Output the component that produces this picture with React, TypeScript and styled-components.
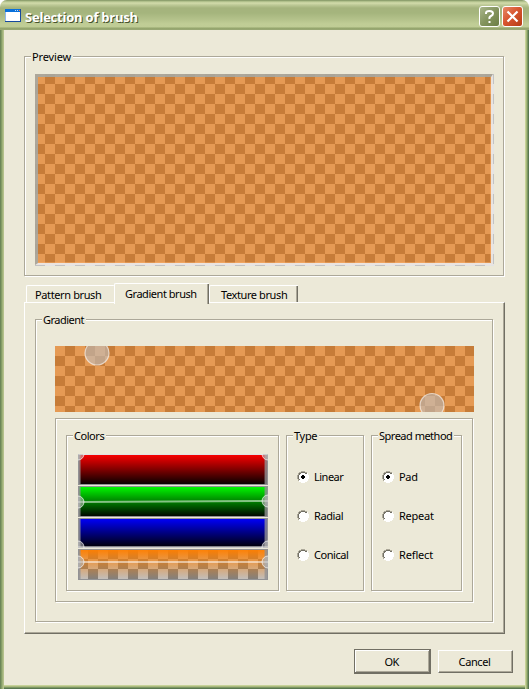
import React, { useState } from "react";
import styled, { createGlobalStyle, css } from "styled-components";

const face = "#ece9d8";
const shade = "#aca899";
const dark = "#716f64";

const GlobalStyle = createGlobalStyle`
  * { box-sizing: border-box; }
  body { margin: 0; background: #fff; }
  button { font: inherit; color: inherit; }
`;

const Window = styled.div`
  width: 529px;
  height: 689px;
  overflow: hidden;
  display: flex;
  flex-direction: column;
  border-radius: 7px 7px 0 0;
  background: ${face};
  color: #000;
  font: 11px/14px "Noto Sans", "Open Sans", sans-serif;
  cursor: default;
`;

const TitleBar = styled.header`
  height: 30px;
  flex: none;
  display: flex;
  align-items: flex-start;
  padding: 6px 6px 0 5px;
  background: linear-gradient(
    #788b5c 0, #a6b782 1px, #d3dcab 3px, #bdc996 5px, #a5b37d 8px,
    #a5b57d 13px, #b3c18a 19px, #c0cd96 24px, #bfcc95 27px, #94a56c 28px, #99a875 30px
  );
`;

const AppIcon = styled.svg`
  flex: none;
  margin-top: 3px;
`;

const Title = styled.h1`
  flex: 1;
  margin: 2px 0 0 4px;
  font: bold 13px/18px "Open Sans", "Noto Sans", sans-serif;
  letter-spacing: -0.22px;
  color: #fff;
  text-shadow: 1px 1px 0 #46522c;
`;

const CaptionButton = styled.button<{ $close?: boolean }>`
  width: 21px;
  height: 21px;
  margin-left: 2px;
  padding: 0;
  display: flex;
  border: 1px solid #fff;
  border-radius: 3px;
  background: ${(p) =>
    p.$close
      ? "linear-gradient(135deg, #e88a69, #d85630 45%, #b63d14)"
      : "linear-gradient(135deg, #a9b68b, #84945e 50%, #6c7e45)"};
`;

const Frame = styled.main`
  flex: 1;
  display: flex;
  flex-direction: column;
  padding: 26px 20px 0 20px;
  border: solid transparent;
  border-width: 0 4px 4px;
  background:
    linear-gradient(${face}, ${face}) padding-box,
    linear-gradient(90deg, #6d8659 0 1px, #849d66 1px 2px, #9fb17b 2px 3px, #b4c18b 3px 4px, transparent 4px calc(100% - 4px), #c6d298 calc(100% - 4px) calc(100% - 3px), #a5b87a calc(100% - 3px) calc(100% - 2px), #7d9763 calc(100% - 2px) calc(100% - 1px), #577650 calc(100% - 1px)) border-box,
    linear-gradient(0deg, #577650 0 1px, #7d9763 1px 2px, #a9b97e 2px 3px, #c6d298 3px 4px) border-box;
`;

const Etched = styled.section<{ $w: number; $h: number }>`
  flex: none;
  width: ${(p) => p.$w}px;
  height: ${(p) => p.$h}px;
  display: flex;
  flex-direction: column;
  border: 1px solid ${shade};
  box-shadow: 1px 1px 0 #fff, inset 1px 1px 0 #fff;
`;

const Legend = styled.h2<{ $spacing?: number }>`
  flex: none;
  align-self: flex-start;
  height: 14px;
  margin: -7px 0 0 6px;
  padding: 0 2px 0 1px;
  background: ${face};
  font: inherit;
  white-space: nowrap;
  letter-spacing: ${(p) => p.$spacing ?? 0}px;
`;

const checker = (light: string, deep: string) =>
  css`repeating-conic-gradient(${deep} 0 25%, ${light} 0 50%) 0 0 / 20px 20px`;

const PreviewArea = styled.div`
  width: 459px;
  height: 192px;
  margin: 10px 0 0 10px;
  padding: 0 1px 1px 0;
  background: ${checker("#e4e4e4", "#c2c2c2")};
`;

const PreviewBrush = styled.div`
  height: 191px;
  border: solid;
  border-width: 3px 2px 2px 3px;
  border-color: rgba(167, 169, 163, 0.9) rgba(236, 236, 238, 0.92) rgba(236, 236, 238, 0.92) rgba(167, 169, 163, 0.9);
  box-shadow: inset -1px -1px 0 rgba(255, 180, 110, 0.45);
  background: ${checker("#e59a54", "#c67c38")} border-box;
`;

const TabStrip = styled.nav`
  flex: none;
  height: 20px;
  margin-top: 7px;
  padding-left: 2px;
  display: flex;
  align-items: flex-end;
`;

const Tab = styled.button<{
  $active?: boolean;
  $covered?: boolean;
  $w: number;
  $spacing: number;
  $pad: number;
}>`
  flex: none;
  width: ${(p) => p.$w}px;
  height: ${(p) => (p.$active ? 21 : 17)}px;
  margin-bottom: ${(p) => (p.$active ? -1 : 1)}px;
  padding: ${(p) => (p.$active ? "0" : "1px")} 0 ${(p) => (p.$active ? "1px" : "0")} ${(p) => p.$pad}px;
  z-index: ${(p) => (p.$active ? 1 : 0)};
  border: 0 solid #fff;
  border-width: 1px 0 0 1px;
  border-radius: 2px 1px 0 0;
  background: ${face};
  box-shadow: ${(p) => (p.$covered ? "none" : `inset -1px 0 0 ${dark}, inset -2px 0 0 ${shade}`)};
  text-align: left;
  white-space: nowrap;
  letter-spacing: ${(p) => p.$spacing}px;
`;

const TabPane = styled.div`
  width: 481px;
  height: 332px;
  flex: none;
  margin-top: -1px;
  padding: 16px 10px;
  border: 1px solid;
  border-color: #fff ${dark} ${dark} #fff;
  box-shadow: inset -1px -1px 0 ${shade};
`;

const GradientStrip = styled.div`
  width: 419px;
  height: 66px;
  flex: none;
  margin: 19px 0 0 19px;
  background: ${checker("#e59a54", "#c67c38")};
`;

const Controls = styled(Etched)`
  margin: 6px 0 0 19px;
  padding: 16px 0 0 10px;
  flex-direction: row;
  gap: 7px;
`;

const Bars = styled.div`
  display: flex;
  flex-direction: column;
  gap: 1px;
  margin: 11px 0 0 11px;
`;

const BarSvg = styled.svg`
  display: block;
  flex: none;
`;

const Options = styled.div`
  display: flex;
  flex-direction: column;
  gap: 25px;
  padding: 27px 0 0 10px;
`;

const Option = styled.label<{ $spacing?: number }>`
  display: flex;
  align-items: center;
  height: 14px;
  gap: 5px;
  letter-spacing: ${(p) => p.$spacing ?? 0}px;
`;

const Footer = styled.footer`
  display: flex;
  align-items: center;
  gap: 7px;
  margin: 15px 0 0 330px;
`;

const PushButton = styled.button<{ $primary?: boolean; $spacing: number }>`
  flex: none;
  width: ${(p) => (p.$primary ? 77 : 75)}px;
  height: ${(p) => (p.$primary ? 25 : 23)}px;
  padding: 0 2px 0 0;
  border: 1px solid;
  border-color: ${(p) => (p.$primary ? dark : `#fff ${dark} ${dark} #fff`)};
  background: ${face};
  box-shadow: ${(p) =>
    p.$primary
      ? `inset -1px -1px 0 ${dark}, inset 1px 1px 0 #fff, inset -2px -2px 0 ${shade}`
      : `inset -1px -1px 0 ${shade}`};
  letter-spacing: ${(p) => p.$spacing}px;
`;

type BarProps = { name: string; color: string; h: number; y1: number; y2: number };

function ColorBar({ name, color, h, y1, y2 }: BarProps) {
  const alpha = name === "alpha";
  return (
    <BarSvg width="190" height={h} viewBox={`0 0 190 ${h}`}>
      <defs>
        <linearGradient id={name} x1="0" y1="0" x2="0" y2="1">
          <stop offset="0" stopColor={color} />
          <stop offset="1" stopColor={alpha ? color : "#000"} stopOpacity={alpha ? 0 : 1} />
        </linearGradient>
        <pattern id={`${name}-check`} width="20" height="20" patternUnits="userSpaceOnUse">
          <rect width="20" height="20" fill="#808080" />
          <path d="M0 0h10v10H0zM10 10h10v10H10z" fill="#c0c0c0" />
        </pattern>
      </defs>
      {alpha && <rect width="190" height={h} fill={`url(#${name}-check)`} />}
      <rect width="190" height={h} fill={`url(#${name})`} />
      <g fill="#929294">
        <rect width="190" height="1" fill={y1 <= 2 ? "#c1bfc5" : "#929294"} />
        <rect y={h - 1} width="190" height="1" />
        <rect width="1" height={h} />
        <rect x="189" width="1" height={h} />
        <rect x="1" y="1" width="1" height={h - 2} opacity=".85" />
        <rect x="2" y="1" width="1" height={h - 2} opacity=".45" />
        <rect x="187" y="1" width="2" height={h - 2} opacity=".8" />
        <rect x="186" y="1" width="1" height={h - 2} opacity=".35" />
      </g>
      <path d={`M0 ${y1}L190 ${y2}`} stroke="#fff" strokeOpacity=".52" strokeWidth="2" />
      {[[0, y1], [190, y2]].map(([x, y]) => (
        <circle key={x} cx={x} cy={y} r="6" fill="#bfbfbf" fillOpacity=".58" stroke="#fff" strokeOpacity=".65" />
      ))}
    </BarSvg>
  );
}

function Radio({ on }: { on: boolean }) {
  return (
    <svg width="12" height="12" viewBox="0 0 12 12" shapeRendering="crispEdges">
      <path d="M4 1h4v1h2v2h1v4h-1v2H8v1H4v-1H2V8H1V4h1V2h2z" fill="#fff" />
      <path d="M4 0h4v1H4zM2 1h2v1H2zM8 1h2v1H8zM1 2h1v2H1zM0 4h1v4H0zM1 8h1v2H1z" fill={shade} />
      <path d="M4 1h4v1H4zM2 2h2v1H2zM8 2h2v1H8zM2 3h1v1H2zM1 4h1v4H1zM2 8h1v1H2z" fill={dark} />
      <path d="M10 2h1v2h-1zM11 4h1v4h-1zM10 8h1v2h-1zM8 10h2v1H8zM4 11h4v1H4zM2 10h2v1H2z" fill="#fff" />
      {on && <path d="M5 4h2v1h1v2H7v1H5V7H4V5h1z" fill="#000" />}
    </svg>
  );
}

function RadioList({ items }: { items: [string, number][] }) {
  const [value, setValue] = useState(0);
  return (
    <Options>
      {items.map(([text, spacing], i) => (
        <Option key={text} $spacing={spacing} onClick={() => setValue(i)}>
          <Radio on={i === value} />
          {text}
        </Option>
      ))}
    </Options>
  );
}

export default function App() {
  return (
    <>
      <GlobalStyle />
      <Window>
        <TitleBar>
          <AppIcon width="16" height="13" viewBox="0 0 16 13" shapeRendering="crispEdges">
            <rect width="16" height="13" fill="#16499d" />
            <rect width="15" height="12" fill="#8fb8ea" />
            <rect x="1" y="3" width="14" height="9" fill="#fff" />
            <rect width="15" height="3" fill="#0870da" />
            <path d="M10 1h1v1h-1zM12 1h1v1h-1z" fill="#b9dcff" />
            <path d="M14 1h1v1h-1z" fill="#f37b36" />
          </AppIcon>
          <Title>Selection of brush</Title>
          <CaptionButton aria-label="Help">
            <svg width="19" height="19" viewBox="0 0 19 19" fill="none" stroke="#fff" strokeWidth="2">
              <path d="M6 7V6q0-2 3.5-2T13 6.5Q13 8 11 9T9.5 12M9.5 14v2" />
            </svg>
          </CaptionButton>
          <CaptionButton $close aria-label="Close">
            <svg width="19" height="19" viewBox="0 0 19 19" fill="none" stroke="#fff" strokeWidth="2.2">
              <path d="M4.5 4.5l10 10M14.5 4.5l-10 10" />
            </svg>
          </CaptionButton>
        </TitleBar>
        <Frame>
          <Etched $w={480} $h={220}>
            <Legend $spacing={-0.15}>Preview</Legend>
            <PreviewArea>
              <PreviewBrush />
            </PreviewArea>
          </Etched>
          <TabStrip>
            <Tab $w={88} $spacing={-0.38} $pad={8} $covered>Pattern brush</Tab>
            <Tab $w={95} $spacing={-0.46} $pad={10} $active>Gradient brush</Tab>
            <Tab $w={89} $spacing={-0.4} $pad={11}>Texture brush</Tab>
          </TabStrip>
          <TabPane>
            <Etched $w={458} $h={303}>
              <Legend $spacing={-0.5}>Gradient</Legend>
              <GradientStrip>
                <BarSvg width="419" height="66">
                  <g fill="#c0c0c0" fillOpacity=".6" stroke="#fff" strokeOpacity=".6" strokeWidth="1.2">
                    <circle cx="42" cy="7" r="12" />
                    <circle cx="377" cy="59.5" r="12" />
                  </g>
                </BarSvg>
              </GradientStrip>
              <Controls $w={418} $h={184}>
                <Etched $w={213} $h={156}>
                  <Legend $spacing={-0.45}>Colors</Legend>
                  <Bars>
                    <ColorBar name="red" color="#ff0000" h={31} y1={0} y2={0} />
                    <ColorBar name="green" color="#00ff00" h={31} y1={16} y2={15} />
                    <ColorBar name="blue" color="#0000ff" h={30} y1={29} y2={29} />
                    <ColorBar name="alpha" color="#ff7f00" h={31} y1={13} y2={13} />
                  </Bars>
                </Etched>
                <Etched $w={78} $h={156}>
                  <Legend $spacing={-0.3}>Type</Legend>
                  <RadioList items={[["Linear", -0.5], ["Radial", -0.4], ["Conical", -0.45]]} />
                </Etched>
                <Etched $w={91} $h={156}>
                  <Legend $spacing={-0.5}>Spread method</Legend>
                  <RadioList items={[["Pad", -0.3], ["Repeat", -0.25], ["Reflect", -0.15]]} />
                </Etched>
              </Controls>
            </Etched>
          </TabPane>
          <Footer>
            <PushButton $primary $spacing={-0.6}>OK</PushButton>
            <PushButton $spacing={-0.4}>Cancel</PushButton>
          </Footer>
        </Frame>
      </Window>
    </>
  );
}
